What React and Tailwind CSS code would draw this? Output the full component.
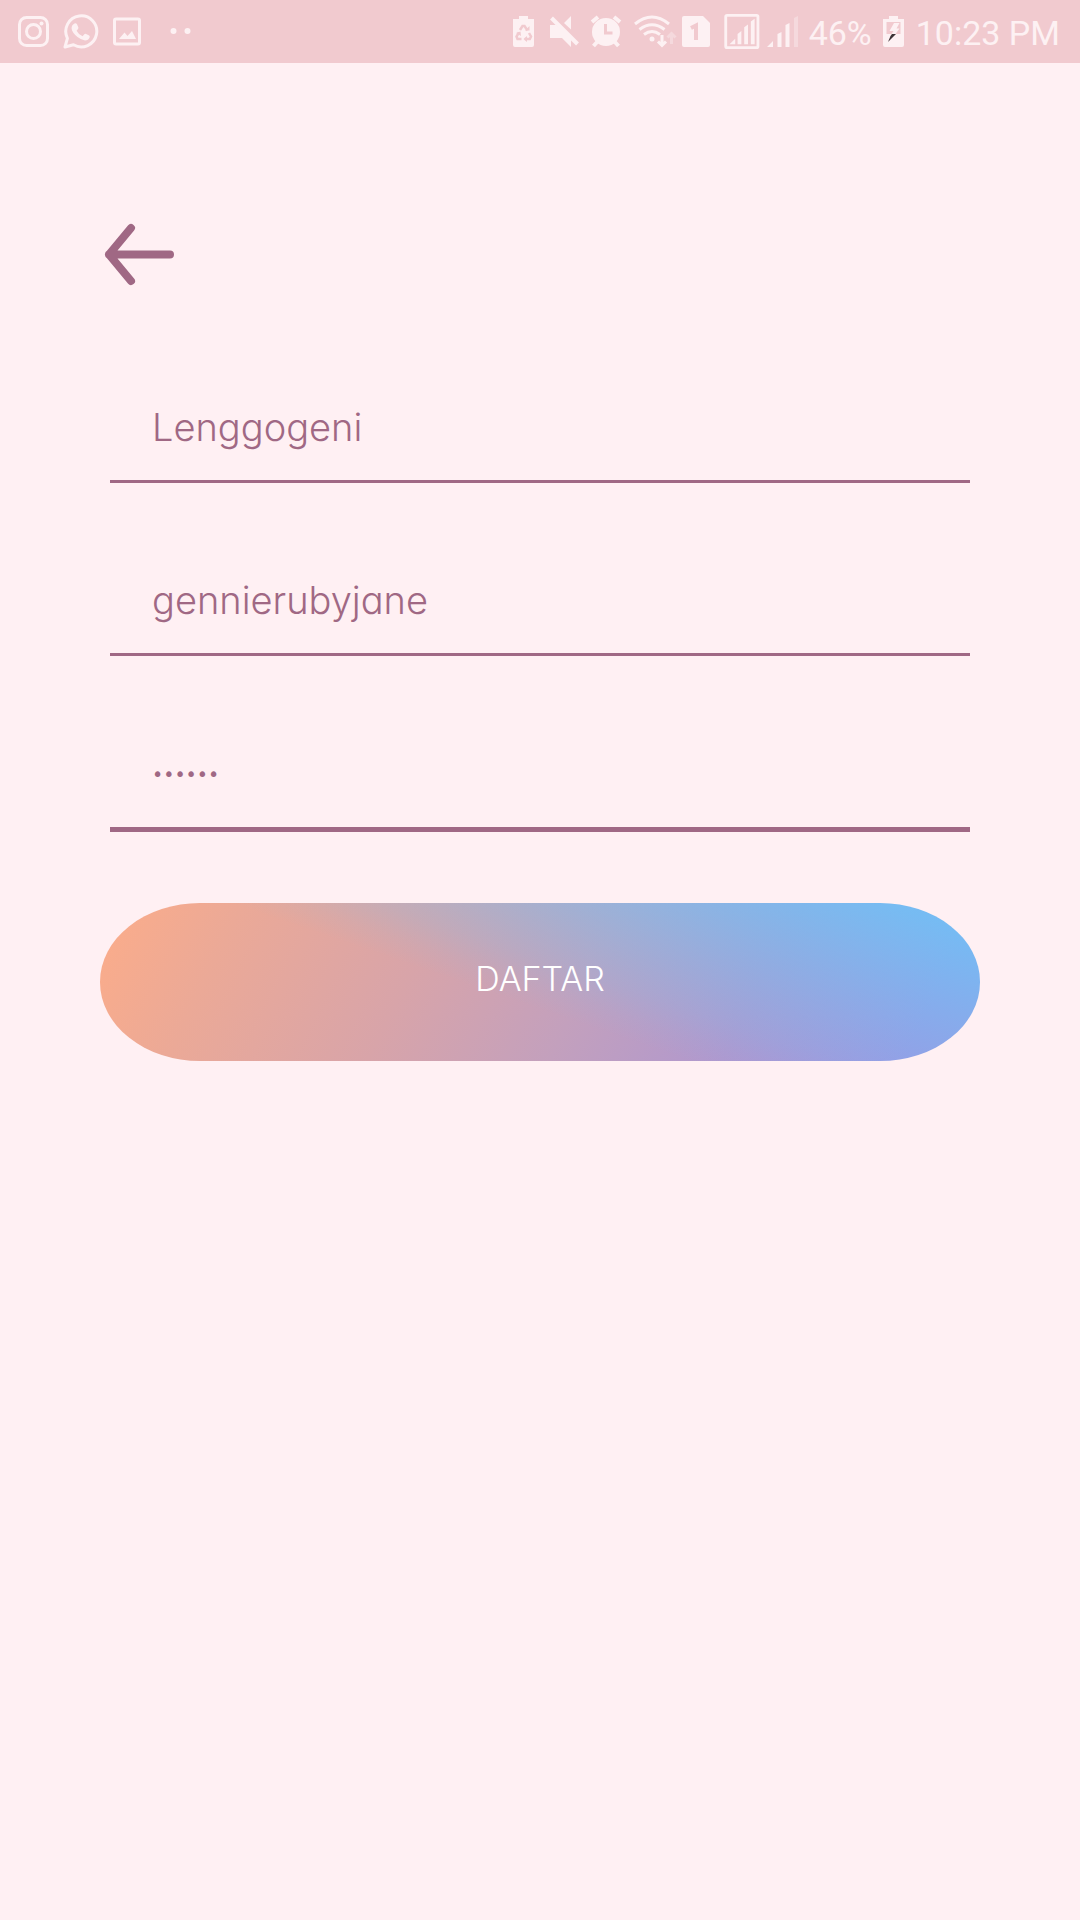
import React from "react";

const ink = "#fdf1f3";
const bar = "#f1cacf";

function Glyph({ box, width, label, children }) {
  return (
    <svg viewBox={box} width={width} height="36" className="shrink-0" role="img" aria-label={label} fill={ink}>
      {children}
    </svg>
  );
}

function StatusBar() {
  return (
    <header className="flex h-[63px] items-center justify-between bg-[#f1cacf] pr-5 pl-4 text-[#fdf1f3]">
      <div className="flex items-center gap-3">
        <Glyph box="16 14 35 36" width="35" label="Instagram">
          <g fill="none" stroke={ink} strokeWidth="3">
            <rect x="19.5" y="17.5" width="28" height="28" rx="7" />
            <circle cx="33.5" cy="31.5" r="7" />
          </g>
          <circle cx="41.5" cy="23.5" r="2" />
        </Glyph>
        <Glyph box="63 14 36 36" width="36" label="WhatsApp">
          <path d="M65 47l2.400-8.700A15.500 15.500 0 1 1 73.500 44.800Z" fill="none" stroke={ink} strokeWidth="3" strokeLinejoin="round" />
          <path d="M74.500 23.500q1.500-.8 2.500.8l1.300 3q.4 1-.5 2l-1.200 1.400q2 4 6 5.500l1.700-1.900q.8-.9 1.800-.4l3 1.500q1 .6.500 2-1.200 3-4.600 3.100-3.400-.2-7.500-3.400-5.600-4.800-5.900-8.600-.2-3.300 2.900-5Z" />
        </Glyph>
        <Glyph box="111 14 32 36" width="32" label="Gallery">
          <rect x="114.500" y="19" width="25" height="25" rx="1.500" fill="none" stroke={ink} strokeWidth="3" />
          <path d="M119 39l5.500-6.500 3 3.500 4.500-5 4 8Z" />
        </Glyph>
        <Glyph box="155 14 40 36" width="40" label="More notifications">
          <circle cx="173.500" cy="31" r="3" />
          <circle cx="187.500" cy="31" r="3" />
        </Glyph>
      </div>

      <div className="flex items-center">
        <Glyph box="508 14 36 36" width="36" label="Battery saver">
          <path d="M518 16h9v3h6v26q0 2-2 2h-17q-2 0-2-2v-26h6Z" />
          <g fill="none" stroke={bar} strokeWidth="2.500">
            <path d="M519 30l2.500-4h2l3 4.500" />
            <path d="M528 33l2 3.500-1.200 2.500h-5" />
            <path d="M520.500 39h-4l-1-2.500 2.500-4" />
          </g>
          <path d="M524 30.500h4.500v-4.500zM526 36v6l-3.500-3zM515 33l4.500-1.500.5 4.500z" fill={bar} />
        </Glyph>
        <Glyph box="544 14 40 36" width="40" label="Muted">
          <path d="M549 25h6l15 13v9l-9-9h-12ZM563 23l7-7v13.500Z" />
          <path d="M550.500 18l26 26" stroke={ink} strokeWidth="4" />
        </Glyph>
        <Glyph box="584 14 42 36" width="42" label="Alarm">
          <circle cx="605" cy="32" r="14" />
          <path d="M591 22l6-5M619 22l-6-5M597 41l-4.500 5M613 41l4.500 5" stroke={ink} strokeWidth="4" />
          <path d="M604.500 24v9h7" fill="none" stroke={bar} strokeWidth="3" />
        </Glyph>
        <Glyph box="626 14 52 36" width="52" label="Wi-Fi">
          <g fill="none" stroke={ink} strokeWidth="3">
            <path d="M634 24q17-14 34 0" />
            <path d="M638.500 29.500q12.500-9.500 25 0" />
            <path d="M643 34.500q8-6 16 0" />
          </g>
          <circle cx="651" cy="39" r="2.500" />
          <path d="M661 35v10M657 41.500l4 4 4-4" stroke={ink} strokeWidth="3" fill="none" />
          <path d="M670.500 44v-10M666.500 37.500l4-4 4 4" stroke={ink} strokeWidth="3" fill="none" opacity=".4" />
        </Glyph>
        <Glyph box="678 14 36 36" width="36" label="SIM 1">
          <path d="M683 16h19l7 7v22q0 2-2 2h-24q-2 0-2-2v-27q0-2 2-2Z" />
          <path d="M690 28l5-2.500v14.500" fill="none" stroke={bar} strokeWidth="4" />
        </Glyph>
        <Glyph box="714 13 48 38" width="48" label="SIM 1 signal">
          <rect x="724" y="14.500" width="34" height="34" rx="1.500" fill="none" stroke={ink} strokeWidth="3" />
          <path d="M728 45l6-6v6zM736.500 45v-11l4-3v14zM743.500 45v-18l4-3v21zM750.500 45v-24l4-3v27z" />
        </Glyph>
        <Glyph box="762 14 42 36" width="42" label="SIM 2 signal">
          <path d="M766 47l6-6v6zM776.500 47v-13l4-2v15zM784.500 47v-22l4-2v24z" />
          <path d="M793 47v-29l4-2v31z" opacity=".4" />
        </Glyph>
        <span className="mx-1 pt-0.5 font-['Roboto',sans-serif] text-[34px] leading-none whitespace-nowrap">46%</span>
        <Glyph box="876 14 36 36" width="36" label="Charging">
          <path d="M889 16h9v3h6v26q0 2-2 2h-17q-2 0-2-2v-26h6Z" />
          <path d="M886.500 22h14v12h-14Z" fill={bar} />
          <path d="M894 23l-4.500 8h4l-2 3h4l4-5.500h-3l3-5.500Z" />
          <path d="M892 34h4l-8 8 2.500-6z" fill="#3c3336" />
        </Glyph>
        <time className="ml-1 pt-0.5 font-['Roboto',sans-serif] text-[34px] leading-none whitespace-nowrap">10:23 PM</time>
      </div>
    </header>
  );
}

const textClass =
  "block w-full bg-transparent px-[42px] text-[38px] font-light leading-[46px] text-[#a06884] outline-none font-['Inter',sans-serif] [font-feature-settings:'cv11']";
const passwordClass =
  "block h-[46px] w-full bg-transparent px-[42px] font-['DejaVu_Sans',sans-serif] text-[19px] text-[#a06884] outline-none";

export default function App() {
  return (
    <div className="min-h-screen bg-[#fff0f3]">
      <StatusBar />
      <main className="px-[100px] pt-[155px]">
        <button type="button" aria-label="Back" className="block">
          <svg width="80" height="72" viewBox="100 218 80 72" fill="none" stroke="#a06884" strokeWidth="8" strokeLinecap="round" strokeLinejoin="round">
            <path d="M131 228L109 254.500L131 281M109 254.500H170" />
          </svg>
        </button>

        <form onSubmit={(e) => e.preventDefault()}>
          <div className="px-2.5">
            <div className="border-b-3 border-[#a06884] pt-[114px] pb-[30px]">
              <input type="text" aria-label="Nama" defaultValue="Lenggogeni" className={textClass} />
            </div>
            <div className="border-b-3 border-[#a06884] pt-[94px] pb-[30px]">
              <input type="text" aria-label="Username" defaultValue="gennierubyjane" className={textClass} />
            </div>
            <div className="border-b-5 border-[#a06884] pt-[95px] pb-[30px]">
              <input type="password" aria-label="Password" defaultValue="blinks" className={passwordClass} />
            </div>
          </div>
          <button
            type="submit"
            className="mt-[71px] h-[158px] w-full rounded-[100px/50%] bg-[linear-gradient(19deg,#6cc4f800_44%,#6cc4f814_49%,#6cc4f833_55%,#6cc4f85c_65%,#6cc4f8d0_93%),linear-gradient(116deg,#faac8b_2%,#eba997_15%,#d8a4a9_36%,#c3a0bd_55%,#b098ce_73%,#a094e0_92%)] pb-2 font-['Inter',sans-serif] text-[34px] font-light text-white"
          >
            DAFTAR
          </button>
        </form>
      </main>
    </div>
  );
}
